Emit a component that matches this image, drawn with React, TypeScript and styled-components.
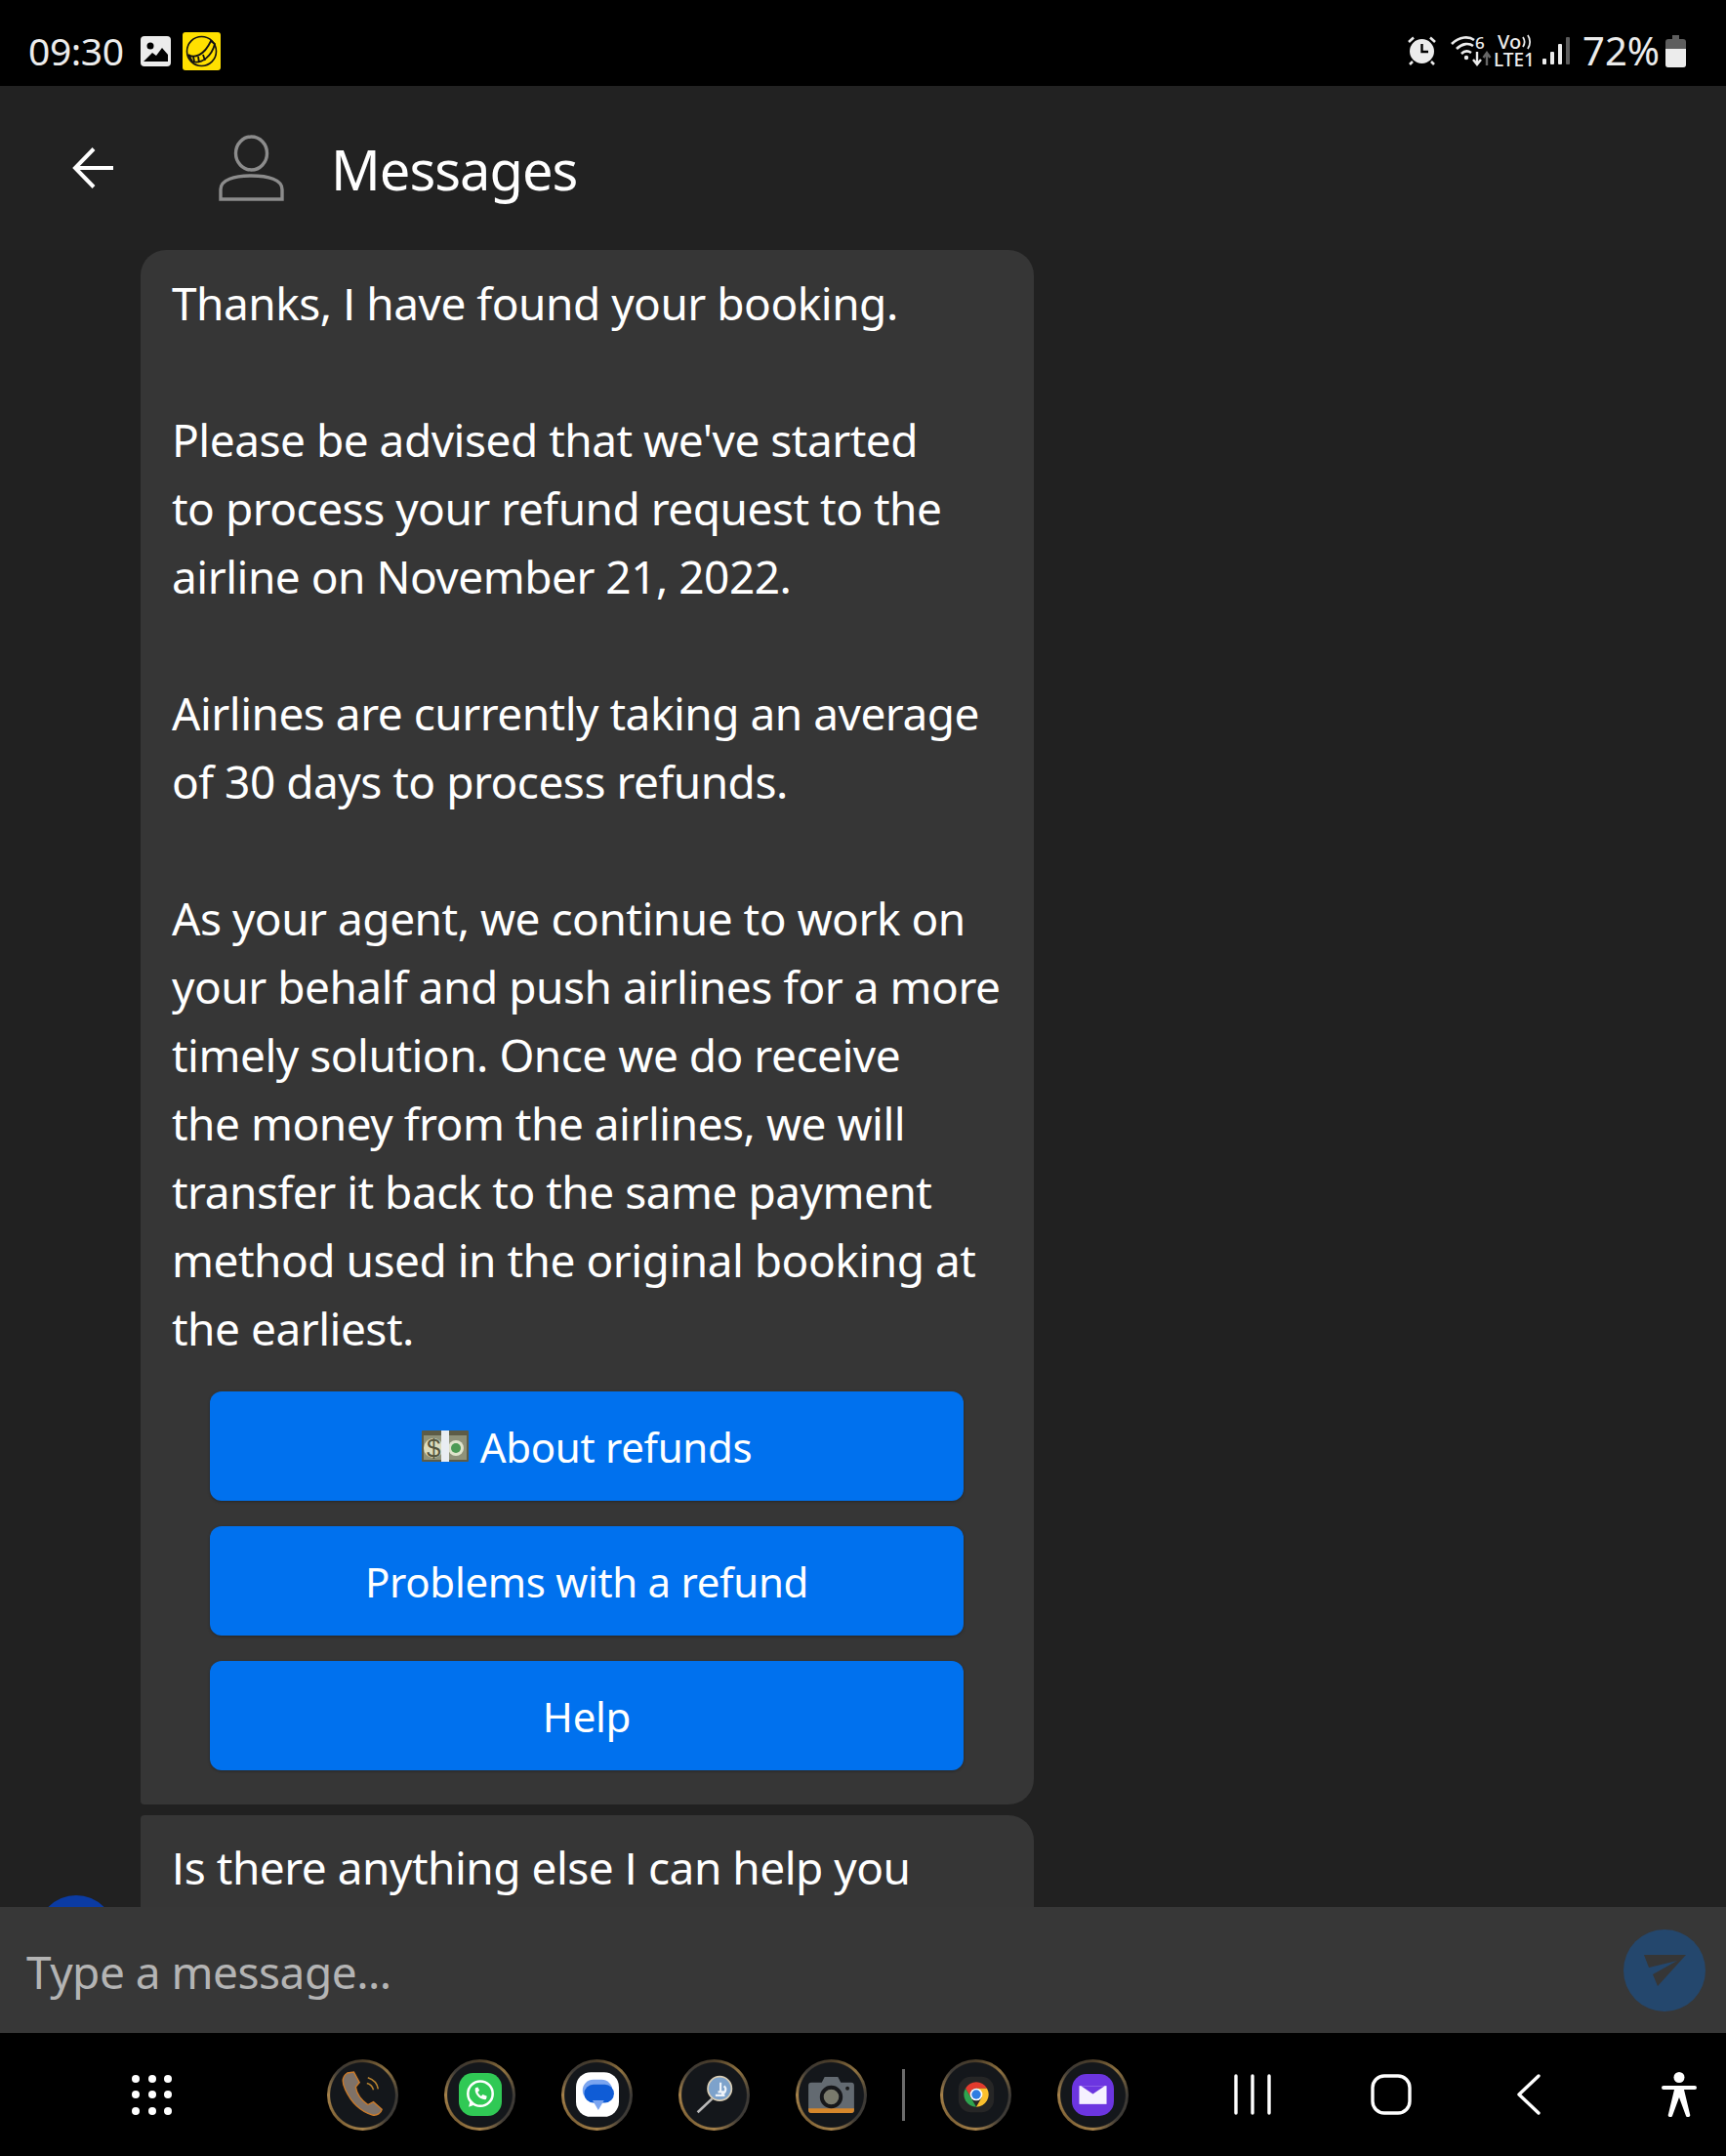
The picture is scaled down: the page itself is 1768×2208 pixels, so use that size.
import { createGlobalStyle, styled } from "styled-components";

const GlobalStyle = createGlobalStyle`
  html, body { margin: 0; padding: 0; background: #000; }
  body { font-family: "Noto Sans", "Open Sans", sans-serif; color: #fff; }
`;

const Screen = styled.div`
  width: 1768px;
  height: 2208px;
  display: flex;
  flex-direction: column;
  overflow: hidden;
  background: #212121;
`;

const StatusBar = styled.div`
  height: 88px;
  flex: none;
  background: #000;
  display: flex;
  align-items: center;
  justify-content: space-between;
  padding: 16px 41px 0 29px;
  box-sizing: border-box;
  color: #ececec;
`;

const StatusGroup = styled.div`
  display: flex;
  align-items: center;
`;

const StatusText = styled.span`
  font-size: 39px;
  line-height: 44px;
  letter-spacing: -0.4px;
  font-stretch: 87%;
`;

const BatteryText = styled(StatusText)`
  font-size: 40px;
  letter-spacing: 0;
  margin-left: 13px;
`;

const StatusIcon = styled.svg<{ $gap?: number }>`
  display: block;
  flex: none;
  margin-left: ${(p) => p.$gap ?? 0}px;
`;

const NetworkLabel = styled.div`
  width: 40px;
  margin-left: 2px;
  display: flex;
  flex-direction: column;
  font-size: 19px;
  line-height: 19px;
  font-weight: 500;
  font-stretch: 87%;
`;

const VoltePart = styled.span`
  display: flex;
  align-items: center;
  padding-left: 4px;
  font-size: 20px;
  line-height: 18px;
`;

const Header = styled.header`
  height: 168px;
  flex: none;
  background: #222;
  display: flex;
  align-items: center;
  padding-left: 74px;
  box-sizing: border-box;
`;

const HeaderIcon = styled.svg<{ $gap: number }>`
  display: block;
  flex: none;
  margin-right: ${(p) => p.$gap}px;
`;

const Title = styled.h1`
  margin: 0;
  padding-top: 2px;
  font-size: 56px;
  font-weight: 400;
  letter-spacing: -1px;
  font-stretch: 87%;
`;

const Chat = styled.main`
  position: relative;
  flex: 1;
  min-height: 0;
  overflow: hidden;
  padding-left: 144px;
  display: flex;
  flex-direction: column;
  gap: 11px;
`;

const Bubble = styled.div<{ $first?: boolean }>`
  width: 915px;
  flex: none;
  box-sizing: border-box;
  background: #363636;
  padding: ${(p) => (p.$first ? "19px 0 35px 32px" : "18px 0 90px 32px")};
  border-radius: ${(p) => (p.$first ? "26px 26px 26px 4px" : "4px 26px 0 0")};
`;

const Message = styled.p`
  margin: 0;
  font-size: 46px;
  line-height: 70px;
  letter-spacing: -0.5px;
  font-stretch: 87%;
  white-space: pre;
`;

/* the capital I of Noto Sans has serifs, the reference one is a plain bar */
const PlainI = styled.span`
  font-family: "Liberation Sans", sans-serif;
  font-stretch: normal;
  line-height: 0;
  letter-spacing: 0;
`;

const Actions = styled.div`
  display: flex;
  flex-direction: column;
  gap: 26px;
  width: 772px;
  margin: 30px 0 0 39px;
`;

const ActionButton = styled.button`
  height: 112px;
  padding: 0;
  border: none;
  border-radius: 12px;
  background: #0071ee;
  color: #fff;
  font-family: inherit;
  font-size: 42px;
  letter-spacing: -0.3px;
  font-stretch: 87%;
  display: flex;
  align-items: center;
  justify-content: center;
  gap: 12px;
  box-shadow: 0 1px 3px rgba(0, 0, 0, 0.3);
`;

const AgentDot = styled.div`
  position: absolute;
  left: 38px;
  bottom: -68px;
  width: 80px;
  height: 80px;
  border-radius: 50%;
  background: #0b3ba3;
`;

const InputBar = styled.div`
  height: 129px;
  flex: none;
  background: #373737;
  display: flex;
  align-items: center;
  justify-content: space-between;
  padding: 0 21px 0 27px;
  box-sizing: border-box;
`;

const Placeholder = styled.span`
  font-size: 46px;
  letter-spacing: -0.5px;
  font-stretch: 87%;
  color: #b4b4b4;
  padding-top: 3px;
`;

const SendButton = styled.div`
  width: 84px;
  height: 84px;
  border-radius: 50%;
  background: #24476d;
  display: flex;
  align-items: center;
  justify-content: center;
`;

const NavBar = styled.nav`
  height: 126px;
  flex: none;
  background: #000;
  display: flex;
  align-items: center;
  padding-left: 135px;
  box-sizing: border-box;
`;

const DotsGrid = styled.div`
  display: grid;
  grid-template-columns: repeat(3, 8px);
  gap: 8.5px;
  margin-right: 159px;
`;

const Dot = styled.span`
  width: 8px;
  height: 8px;
  border-radius: 50%;
  background: #fff;
`;

const Dock = styled.div`
  display: flex;
  align-items: center;
  gap: 47px;
`;

const DockIcon = styled.div`
  width: 73px;
  height: 73px;
  flex: none;
  border-radius: 50%;
  background:
    radial-gradient(circle closest-side, #14171b 90%, rgba(0, 0, 0, 0) 93%),
    conic-gradient(#4a3c28, #8f7240, #3d3a36, #3d3a36, #a5814a, #7e6236, #a5814a, #3d3a36, #4a3c28);
  display: flex;
  align-items: center;
  justify-content: center;
`;

const DockDivider = styled.div`
  width: 3px;
  height: 53px;
  background: #6b6b6b;
  margin: 0 -11px;
`;

const SoftKeys = styled.div`
  display: flex;
  align-items: center;
  margin-left: 108px;
`;

const SoftKey = styled.svg<{ $gap: number }>`
  display: block;
  flex: none;
  margin-right: ${(p) => p.$gap}px;
`;

const restLines = [
  " have found your booking.",
  "",
  "Please be advised that we've started",
  "to process your refund request to the",
  "airline on November 21, 2022.",
  "",
  "Airlines are currently taking an average",
  "of 30 days to process refunds.",
  "",
  "As your agent, we continue to work on",
  "your behalf and push airlines for a more",
  "timely solution. Once we do receive",
  "the money from the airlines, we will",
  "transfer it back to the same payment",
  "method used in the original booking at",
  "the earliest.",
].join("\n");

const MoneyIcon = () => (
  <svg width="48" height="32" viewBox="0 0 48 32">
    <rect width="48" height="32" rx="1" fill="#5d5c47" />
    <rect x="2" y="5" width="44" height="25" fill="#8f927a" />
    <circle cx="12" cy="18" r="10" fill="#dcdcbe" />
    <text x="12" y="27" fontSize="26" textAnchor="middle" fill="#55553f" fontFamily="Liberation Sans">$</text>
    <circle cx="35" cy="18" r="8" fill="#dfe3cb" />
    <circle cx="35" cy="18" r="5" fill="#4d9a54" />
    <rect x="20" y="0" width="8" height="32" fill="#e9edf2" />
  </svg>
);

const App = () => {
  const dots = Array.from({ length: 9 });
  return (
    <Screen>
      <GlobalStyle />
      <StatusBar>
        <StatusGroup>
          <StatusText>09:30</StatusText>
          <StatusIcon $gap={17} width="31" height="31" viewBox="0 0 31 31">
            <rect width="31" height="31" rx="4" fill="#ececec" />
            <circle cx="10" cy="10" r="3.5" fill="#000" />
            <path d="M3 26 L12 17 L16 20 L22 12 L28 19 V26 Z" fill="#000" />
          </StatusIcon>
          <StatusIcon $gap={12} width="39" height="39" viewBox="0 0 39 39">
            <rect width="39" height="39" rx="3" fill="#ffe000" />
            <circle cx="19.5" cy="19.5" r="15" fill="none" stroke="#111" strokeWidth="1.6" />
            <path d="M6 23 C12 27 22 24 29 9 L33 12 C30 24 20 33 10 30 Z" fill="none" stroke="#111" strokeWidth="1.8" />
            <path d="M11 25 L12 30 M16 25 L17 31 M21 23 L23 29" stroke="#111" strokeWidth="1.8" />
          </StatusIcon>
        </StatusGroup>
        <StatusGroup>
          <StatusIcon width="29" height="30" viewBox="0 0 29 30">
            <circle cx="14.5" cy="15.5" r="12.5" fill="#ececec" />
            <path d="M14.5 8 V16 H21" fill="none" stroke="#000" strokeWidth="2.4" />
            <path d="M1 6 L6 1.5 M28 6 L23 1.5 M5 26 L2 29 M24 26 L27 29" stroke="#ececec" strokeWidth="2.6" />
          </StatusIcon>
          <StatusIcon $gap={15} width="42" height="40" viewBox="0 -4 42 40">
            <path d="M1 9 C9 1 19 1 24 5 M6 14 C12 8 19 8 23 11 M11 19 C14 16 18 16 21 18" fill="none" stroke="#ececec" strokeWidth="2.6" />
            <circle cx="16" cy="23" r="2.2" fill="#ececec" />
            <text x="25" y="14" fontSize="17" fontWeight="500" fill="#ececec" fontFamily="Noto Sans">6</text>
            <path d="M27 17 V29 M23 25 L27 30 L31 25" fill="none" stroke="#ececec" strokeWidth="2.4" />
            <path d="M37 31 V19 M33.5 23 L37 18 L40.5 23" fill="none" stroke="#666" strokeWidth="2.4" />
          </StatusIcon>
          <NetworkLabel>
            <VoltePart>
              Vo
              <svg width="12" height="16" viewBox="0 0 12 16" fill="none" stroke="#ececec" strokeWidth="1.8">
                <path d="M2 3 C4 6 4 10 2 13 M7 1 C10 5 10 11 7 15" />
              </svg>
            </VoltePart>
            <span>LTE1</span>
          </NetworkLabel>
          <StatusIcon $gap={10} width="28" height="30" viewBox="0 0 28 30">
            <rect x="0" y="23" width="4" height="6" rx="1" fill="#ececec" />
            <rect x="8" y="16" width="4" height="13" rx="1" fill="#ececec" />
            <rect x="16" y="8" width="4" height="21" rx="1" fill="#ececec" />
            <rect x="24" y="1" width="4" height="28" rx="1" fill="#5c5c5c" />
          </StatusIcon>
          <BatteryText>72%</BatteryText>
          <StatusIcon $gap={6} width="21" height="33" viewBox="0 0 21 33">
            <path d="M7 0 H14 V4 H18 A3 3 0 0 1 21 7 V30 A3 3 0 0 1 18 33 H3 A3 3 0 0 1 0 30 V7 A3 3 0 0 1 3 4 H7 Z" fill="#5e5e5e" />
            <path d="M0 14 H21 V30 A3 3 0 0 1 18 33 H3 A3 3 0 0 1 0 30 Z" fill="#ececec" />
          </StatusIcon>
        </StatusGroup>
      </StatusBar>

      <Header>
        <HeaderIcon $gap={108} width="42" height="42" viewBox="0 0 42 42" fill="none" stroke="#fff" strokeWidth="4">
          <path d="M42 21 H3 M22 1.5 L3 21 L22 40.5" />
        </HeaderIcon>
        <HeaderIcon $gap={48} width="67" height="68" viewBox="0 0 67 68" fill="none" stroke="#8c8c8c" strokeWidth="3.4">
          <ellipse cx="33.5" cy="19" rx="16" ry="17" />
          <path d="M2 66 V56 C2 46 16 42 33.5 42 C51 42 65 46 65 56 V66 Z" />
        </HeaderIcon>
        <Title>Messages</Title>
      </Header>

      <Chat>
        <Bubble $first>
          <Message>Thanks, <PlainI>I</PlainI>{restLines}</Message>
          <Actions>
            <ActionButton><MoneyIcon />About refunds</ActionButton>
            <ActionButton>Problems with a refund</ActionButton>
            <ActionButton>Help</ActionButton>
          </Actions>
        </Bubble>
        <Bubble>
          <Message><PlainI>I</PlainI>s there anything else <PlainI>I</PlainI> can help you</Message>
        </Bubble>
        <AgentDot />
      </Chat>

      <InputBar>
        <Placeholder>Type a message...</Placeholder>
        <SendButton>
          <svg width="43" height="32" viewBox="0 0 43 32">
            <path d="M0 0 H43 L14 32 L9 20 L34 6 L5 13 Z" fill="#363636" />
          </svg>
        </SendButton>
      </InputBar>

      <NavBar>
        <DotsGrid>
          {dots.map((_, i) => <Dot key={i} />)}
        </DotsGrid>
        <Dock>
          <DockIcon>
            <svg width="44" height="48" viewBox="0 0 46 50">
              <path d="M6 2 C0 6 0 12 4 20 C10 33 20 43 33 47 C38 48 42 45 43 41 L34 33 L28 36 C21 31 16 24 15 17 L19 12 L13 1 Z" fill="#7f7268" stroke="#c97a2a" strokeWidth="1.5" />
              <path d="M27 13 C31 14 33 16 34 20 M28 7 C34 9 38 13 39 19" fill="none" stroke="#b98430" strokeWidth="1.6" />
            </svg>
          </DockIcon>
          <DockIcon>
            <svg width="44" height="44" viewBox="0 0 52 52">
              <rect width="52" height="52" rx="17" fill="#30c955" />
              <circle cx="26" cy="25" r="15" fill="none" stroke="#fff" strokeWidth="3" />
              <path d="M12 41 L14 32 L20 38 Z" fill="#fff" />
              <path d="M20 18 C18 24 25 33 33 32 L34 28 L29 26 L27 28 C25 27 23 24 23 23 L25 21 L23 17 Z" fill="#fff" />
            </svg>
          </DockIcon>
          <DockIcon>
            <svg width="44" height="46" viewBox="0 0 52 54">
              <rect width="52" height="54" rx="18" fill="#fff" />
              <rect x="8" y="9" width="36" height="26" rx="13" fill="#7ba5f0" />
              <rect x="10" y="15" width="36" height="22" rx="11" fill="#0f5cd6" />
              <path d="M20 34 H34 L27 46 Z" fill="#7ba5f0" />
            </svg>
          </DockIcon>
          <DockIcon>
            <svg width="40" height="42" viewBox="0 0 46 46">
              <path d="M20 28 L3 44" stroke="#b9b9b9" strokeWidth="3" />
              <circle cx="29" cy="16" r="14" fill="#7da2cb" stroke="#d9cdb5" strokeWidth="2" />
              <path d="M24 24 H35 M30 9 V20 M27 20 H34 M34 13 A5 5 0 0 1 31 22" fill="none" stroke="#eef3fa" strokeWidth="2.5" />
            </svg>
          </DockIcon>
          <DockIcon>
            <svg width="47" height="39" viewBox="0 0 48 40">
              <path d="M3 7 H14 L17 1 H31 L34 7 H45 A3 3 0 0 1 48 10 V36 A3 3 0 0 1 45 39 H3 A3 3 0 0 1 0 36 V10 A3 3 0 0 1 3 7 Z" fill="#636a71" />
              <path d="M0 34 H48 V36 A3 3 0 0 1 45 39 H3 A3 3 0 0 1 0 36 Z" fill="#d6872b" />
              <circle cx="24" cy="22" r="10" fill="#7a7a6c" stroke="#16171a" strokeWidth="4" />
              <circle cx="41" cy="13" r="2" fill="#1a1a1a" />
            </svg>
          </DockIcon>
          <DockDivider />
          <DockIcon>
            <svg width="40" height="40" viewBox="-22 -22 44 44">
              <rect x="-20" y="-20" width="40" height="40" rx="14" fill="#262626" />
              <path d="M-12.1 -7 A14 14 0 0 1 12.1 -7 L0 -7 A7 7 0 0 0 -6 3.5 Z" fill="#e33b2e" />
              <path d="M-12.1 -7 L-6 3.5 L0 14 A14 14 0 0 1 -12.1 -7 Z" fill="#2ea44f" />
              <path d="M12.1 -7 A14 14 0 0 1 0 14 L6 3.5 L0 -7 Z" fill="#fbc02d" />
              <circle r="7" fill="#fff" />
              <circle r="5.2" fill="#2f7de1" />
            </svg>
          </DockIcon>
          <DockIcon>
            <svg width="43" height="43" viewBox="0 0 46 46">
              <rect width="46" height="46" rx="16" fill="#6c35e0" />
              <rect x="8" y="13" width="30" height="20" fill="#f5f1ff" />
              <path d="M10 13 H36 L23 22 Z" fill="#6c35e0" />
            </svg>
          </DockIcon>
        </Dock>
        <SoftKeys>
          <SoftKey $gap={102} width="38" height="42" viewBox="0 0 38 42" fill="none" stroke="#fff" strokeWidth="3.4" strokeLinecap="round">
            <path d="M2 2 V40 M19 2 V40 M36 2 V40" />
          </SoftKey>
          <SoftKey $gap={108} width="42" height="42" viewBox="0 0 42 42" fill="none" stroke="#fff" strokeWidth="3.4">
            <rect x="2" y="2" width="38" height="38" rx="12" />
          </SoftKey>
          <SoftKey $gap={124} width="24" height="42" viewBox="0 0 24 42" fill="none" stroke="#fff" strokeWidth="3.4" strokeLinecap="round" strokeLinejoin="round">
            <path d="M22 2 L2 21 L22 40" />
          </SoftKey>
          <SoftKey $gap={0} width="36" height="46" viewBox="0 0 36 46" fill="#fff">
            <circle cx="18" cy="5.5" r="5.5" />
            <path d="M2 14 H34 A1.8 1.8 0 0 1 34 18 H23 L29 43 A2 2 0 0 1 25 45 L18 26 L11 45 A2 2 0 0 1 7 43 L13 18 H2 A1.8 1.8 0 0 1 2 14 Z" />
          </SoftKey>
        </SoftKeys>
      </NavBar>
    </Screen>
  );
};

export default App;
